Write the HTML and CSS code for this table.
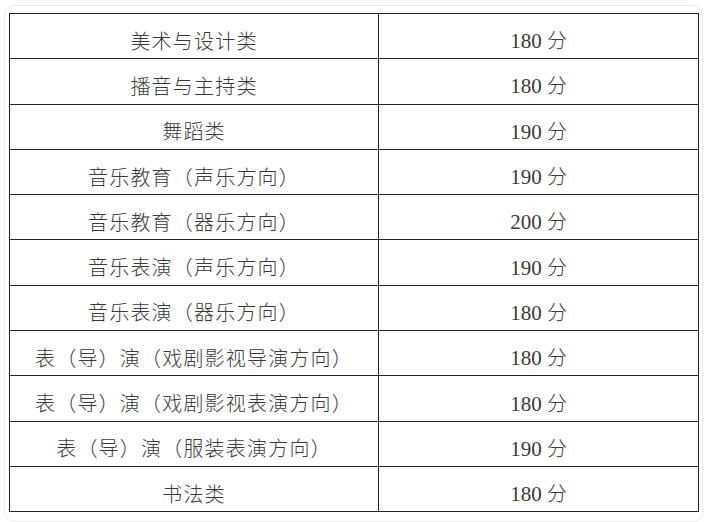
FILE: index.html
```html
<!DOCTYPE html>
<html lang="zh">
<head>
<meta charset="utf-8">
<link rel="stylesheet" href="styles.css">
</head>
<body>
<div class="card">
  <table class="scores">
    <tr><td class="cat">美术与设计类</td><td class="num">180 <span class="cjk">分</span></td></tr>
    <tr><td class="cat">播音与主持类</td><td class="num">180 <span class="cjk">分</span></td></tr>
    <tr><td class="cat">舞蹈类</td><td class="num">190 <span class="cjk">分</span></td></tr>
    <tr><td class="cat">音乐教育（声乐方向）</td><td class="num">190 <span class="cjk">分</span></td></tr>
    <tr><td class="cat">音乐教育（器乐方向）</td><td class="num">200 <span class="cjk">分</span></td></tr>
    <tr><td class="cat">音乐表演（声乐方向）</td><td class="num">190 <span class="cjk">分</span></td></tr>
    <tr><td class="cat">音乐表演（器乐方向）</td><td class="num">180 <span class="cjk">分</span></td></tr>
    <tr><td class="cat">表（导）演（戏剧影视导演方向）</td><td class="num">180 <span class="cjk">分</span></td></tr>
    <tr><td class="cat">表（导）演（戏剧影视表演方向）</td><td class="num">180 <span class="cjk">分</span></td></tr>
    <tr><td class="cat">表（导）演（服装表演方向）</td><td class="num">190 <span class="cjk">分</span></td></tr>
    <tr><td class="cat">书法类</td><td class="num">180 <span class="cjk">分</span></td></tr>
  </table>
</div>
</body>
</html>
```

FILE: styles.css
```css
html, body {
  margin: 0;
  padding: 0;
  background: #ffffff;
}

.card {
  margin: 5px 10px 1px 4px;
  padding: 7px 4px 9px 4px;
  border: 1px solid #ececec;
  border-radius: 10px;
}

.scores {
  width: 690px;
  border-collapse: collapse;
  table-layout: fixed;
  color: #3a3a3a;
}

.scores tr {
  height: 45.3px;
}

.scores td {
  border: 1px solid #222222;
  text-align: center;
  vertical-align: middle;
  padding: 9px 0 0 0;
  line-height: 24px;
}

.scores td.cat {
  width: 368px;
  font-family: "Noto Sans CJK SC", sans-serif;
  font-size: 20px;
  letter-spacing: 1.2px;
  font-weight: 300;
}

.scores td.num {
  font-family: "Liberation Serif", "Noto Sans CJK SC", serif;
  font-size: 21px;
}

.scores .cjk {
  font-family: "Noto Sans CJK SC", sans-serif;
  font-size: 20px;
  font-weight: 300;
}
```
